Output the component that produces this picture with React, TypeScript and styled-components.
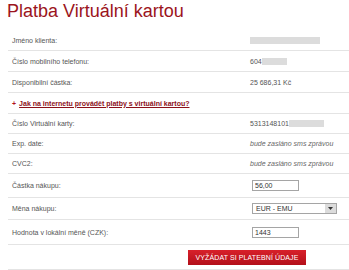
import React from 'react';
import styled, { createGlobalStyle } from 'styled-components';

const GlobalStyle = createGlobalStyle`
  html, body {
    margin: 0;
    padding: 0;
    background: #ffffff;
  }
  body {
    font-family: 'Liberation Sans', Arial, sans-serif;
    overflow: hidden;
  }
`;

const Page = styled.div`
  width: 341px;
  padding-left: 8px;
`;

const Title = styled.h1`
  margin: 0 0 8px -1px;
  height: 22px;
  font-size: 18px;
  line-height: 22px;
  font-weight: normal;
  color: #9b1420;
  white-space: nowrap;
`;

const Table = styled.div`
  display: flex;
  flex-direction: column;
`;

const Row = styled.div<{ $h: number }>`
  display: grid;
  grid-template-columns: 242px 1fr;
  align-items: center;
  height: ${({ $h }) => $h}px;
  border-bottom: 1px solid #e4e4e4;
  font-size: 7px;
  color: #555555;
`;

const Label = styled.div`
  padding-left: 4px;
  white-space: nowrap;
`;

const Value = styled.div<{ $italic?: boolean }>`
  display: flex;
  align-items: center;
  white-space: nowrap;
  font-style: ${({ $italic }) => ($italic ? 'italic' : 'normal')};
  color: ${({ $italic }) => ($italic ? '#666666' : '#555555')};
`;

const Masked = styled.span<{ $w: number }>`
  display: inline-block;
  width: ${({ $w }) => $w}px;
  height: 7px;
  background: #dcdcdc;
`;

const LinkRow = styled.div`
  display: flex;
  align-items: center;
  height: 20px;
  padding-left: 4px;
  border-bottom: 1px solid #e4e4e4;
  font-size: 7px;
  font-weight: bold;
  white-space: nowrap;
`;

const Plus = styled.span`
  color: #b0101c;
  margin-right: 3px;
`;

const HelpLink = styled.a`
  color: #8c1019;
  text-decoration: underline;
`;

const TextInput = styled.input`
  box-sizing: border-box;
  width: 47px;
  height: 11px;
  margin: 0 0 0 2px;
  padding: 0 2px;
  border: 1px solid #a5a5a5;
  font-family: 'Liberation Sans', Arial, sans-serif;
  font-size: 7px;
  color: #333333;
  outline: none;
`;

const Select = styled.div`
  box-sizing: border-box;
  display: flex;
  align-items: center;
  justify-content: space-between;
  width: 85px;
  height: 11px;
  margin-left: 2px;
  padding-left: 3px;
  border: 1px solid #a5a5a5;
  font-size: 7px;
  color: #333333;
`;

const SelectArrow = styled.span`
  display: flex;
  align-items: center;
  justify-content: center;
  width: 11px;
  height: 9px;
  background: #dcdcdc;
  border-left: 1px solid #ffffff;
`;

const ButtonRow = styled.div`
  display: flex;
  align-items: center;
  height: 24px;
  padding-left: 180px;
  border-bottom: 1px solid #e4e4e4;
`;

const SubmitButton = styled.button`
  width: 118px;
  height: 15px;
  padding: 0;
  border: 0;
  background: linear-gradient(#d8202a, #b3101a);
  color: #ffffff;
  font-family: 'Liberation Sans', Arial, sans-serif;
  font-size: 7px;
  letter-spacing: 0.1px;
  white-space: nowrap;
`;

export default function App() {
  return (
    <>
      <GlobalStyle />
      <Page>
        <Title>Platba Virtuální kartou</Title>
        <Table>
          <Row $h={20}>
            <Label>Jméno klienta:</Label>
            <Value>
              <Masked $w={70} />
            </Value>
          </Row>
          <Row $h={20}>
            <Label>Číslo mobilního telefonu:</Label>
            <Value>
              604
              <Masked $w={25} />
            </Value>
          </Row>
          <Row $h={20}>
            <Label>Disponibilní částka:</Label>
            <Value>25 686,31 Kč</Value>
          </Row>
          <LinkRow>
            <Plus>+</Plus>
            <HelpLink>Jak na internetu provádět platby s virtuální kartou?</HelpLink>
          </LinkRow>
          <Row $h={19}>
            <Label>Číslo Virtuální karty:</Label>
            <Value>
              5313148101
              <Masked $w={35} />
            </Value>
          </Row>
          <Row $h={19}>
            <Label>Exp. date:</Label>
            <Value $italic>bude zasláno sms zprávou</Value>
          </Row>
          <Row $h={19}>
            <Label>CVC2:</Label>
            <Value $italic>bude zasláno sms zprávou</Value>
          </Row>
          <Row $h={23}>
            <Label>Částka nákupu:</Label>
            <Value>
              <TextInput defaultValue="56,00" />
            </Value>
          </Row>
          <Row $h={21}>
            <Label>Měna nákupu:</Label>
            <Value>
              <Select>
                EUR - EMU
                <SelectArrow>
                  <svg width="5" height="3" viewBox="0 0 5 3">
                    <path d="M0 0h5L2.5 3z" fill="#333" />
                  </svg>
                </SelectArrow>
              </Select>
            </Value>
          </Row>
          <Row $h={24}>
            <Label>Hodnota v lokální měně (CZK):</Label>
            <Value>
              <TextInput defaultValue="1443" />
            </Value>
          </Row>
          <ButtonRow>
            <SubmitButton>VYŽÁDAT SI PLATEBNÍ ÚDAJE</SubmitButton>
          </ButtonRow>
        </Table>
      </Page>
    </>
  );
}
